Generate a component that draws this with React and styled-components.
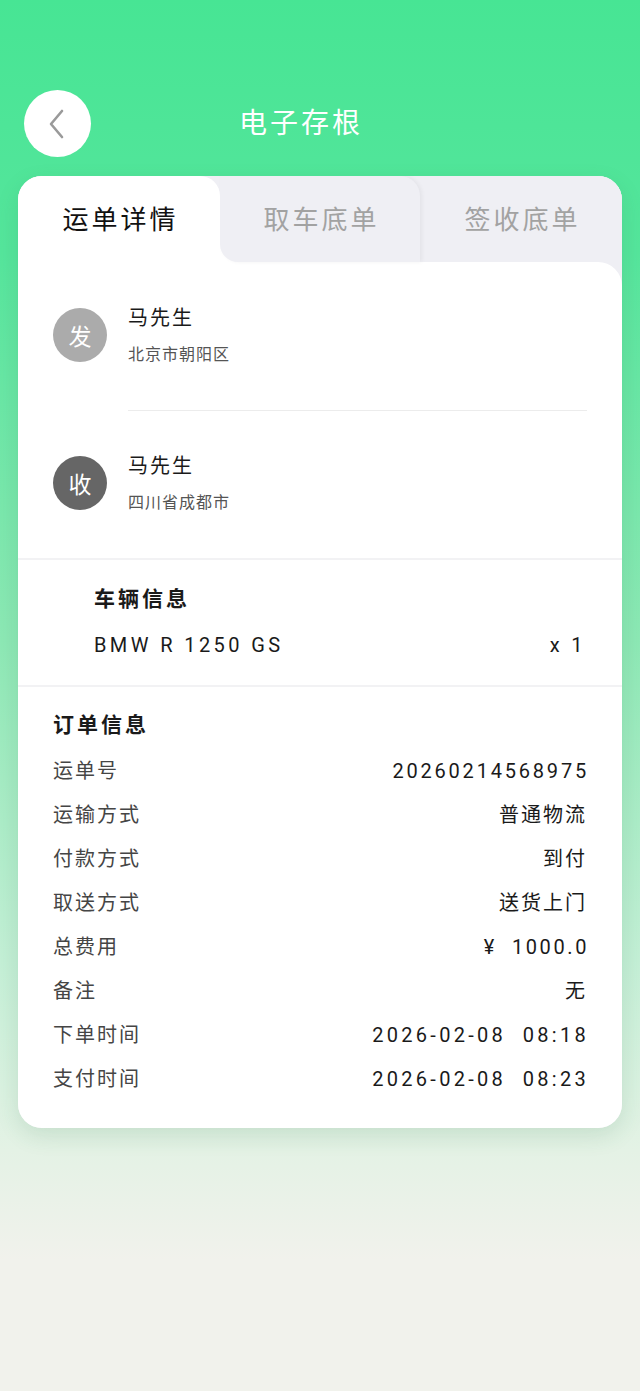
import styled, { createGlobalStyle } from "styled-components";

const GlobalStyle = createGlobalStyle`
  * { box-sizing: border-box; }
  body {
    margin: 0;
    font-family: Roboto, "Noto Sans CJK SC", sans-serif;
    background: #f1f2ec;
  }
`;

const parties = [
  { tag: "发", name: "马先生", address: "北京市朝阳区", dark: false },
  { tag: "收", name: "马先生", address: "四川省成都市", dark: true },
];

const orderRows = [
  { label: "运单号", value: "20260214568975", spacing: 2.8 },
  { label: "运输方式", value: "普通物流" },
  { label: "付款方式", value: "到付" },
  { label: "取送方式", value: "送货上门" },
  { label: "总费用", value: "¥  1000.0", spacing: 2.6 },
  { label: "备注", value: "无" },
  { label: "下单时间", value: "2026-02-08  08:18", spacing: 3.3 },
  { label: "支付时间", value: "2026-02-08  08:23", spacing: 3.3 },
];

const tabs = ["运单详情", "取车底单", "签收底单"];

const App = () => {
  return (
    <Page>
      <GlobalStyle />
      <Header>
        <BackButton aria-label="返回">
          <svg width="16" height="30" viewBox="0 0 16 30">
            <polyline
              points="14,2 3,15 14,28"
              fill="none"
              stroke="#9a9a9a"
              strokeWidth="2.6"
              strokeLinecap="round"
              strokeLinejoin="round"
            />
          </svg>
        </BackButton>
        <Title>电子存根</Title>
      </Header>

      <Card>
        <TabBar>
          {tabs.map((t, i) => (
            <Tab key={t} $active={i === 0} $index={i}>
              {t}
            </Tab>
          ))}
        </TabBar>

        <Content>
          <PartySection>
            {parties.map((p, i) => (
              <div key={p.tag}>
                {i > 0 && <PartyDivider />}
                <PartyRow>
                  <Avatar $dark={p.dark}>{p.tag}</Avatar>
                  <PartyInfo>
                    <PartyName>{p.name}</PartyName>
                    <PartyAddress>{p.address}</PartyAddress>
                  </PartyInfo>
                </PartyRow>
              </div>
            ))}
          </PartySection>

          <VehicleSection>
            <SectionTitle>车辆信息</SectionTitle>
            <VehicleRow>
              <span>BMW R 1250 GS</span>
              <span>x 1</span>
            </VehicleRow>
          </VehicleSection>

          <OrderSection>
            <SectionTitle>订单信息</SectionTitle>
            <OrderList>
              {orderRows.map(({ label, value, spacing }) => (
                <OrderRow key={label}>
                  <Label>{label}</Label>
                  <Value $spacing={spacing}>{value}</Value>
                </OrderRow>
              ))}
            </OrderList>
          </OrderSection>
        </Content>
      </Card>
    </Page>
  );
};

const Page = styled.div`
  min-height: 1391px;
  padding: 90px 18px 40px;
  background: linear-gradient(
    180deg,
    #47e594 0px,
    #55e59c 250px,
    #8de8b5 640px,
    #c4efd6 960px,
    #e4f2e5 1150px,
    #f1f2ec 1260px,
    #f1f2ec 100%
  );
`;

const Header = styled.div`
  display: flex;
  align-items: center;
  padding-left: 6px;
  height: 67px;
`;

const BackButton = styled.button`
  width: 67px;
  height: 67px;
  border-radius: 50%;
  border: none;
  background: #fff;
  display: flex;
  align-items: center;
  justify-content: center;
  padding: 0 4px 0 0;
  cursor: pointer;
`;

const Title = styled.h1`
  margin: 0 0 0 148px;
  font-size: 28px;
  font-weight: 400;
  letter-spacing: 3px;
  color: #fff;
  line-height: 40px;
`;

const Card = styled.div`
  margin-top: 19px;
  background: #efeff4;
  border-radius: 24px;
  overflow: hidden;
  box-shadow: 0 8px 22px rgba(40, 110, 70, 0.14);
`;

const TabBar = styled.div`
  display: grid;
  grid-template-columns: 202px 200px 1fr;
  height: 86px;
  background: linear-gradient(180deg, #efeff4 50%, #fff 50%);
`;

const Tab = styled.div`
  position: relative;
  z-index: ${(p) => 3 - p.$index};
  display: flex;
  align-items: center;
  justify-content: center;
  padding: 0 0 4px 3px;
  font-size: 26px;
  letter-spacing: 3px;
  color: ${(p) => (p.$active ? "#111" : "#a2a2a2")};
  background: ${(p) => (p.$active ? "#fff" : "#efeff4")};
  border-radius: ${(p) =>
    p.$active ? "0 20px 0 0" : p.$index === 1 ? "0 20px 0 18px" : "0"};
  box-shadow: ${(p) =>
    p.$index === 1 ? "2px 0 4px rgba(0, 0, 0, 0.05)" : "none"};
`;

const Content = styled.div`
  background: #fff;
  border-radius: 0 24px 0 0;
`;

const PartySection = styled.div`
  padding: 42px 35px 44px;
  border-bottom: 2px solid #f2f2f4;
`;

const PartyRow = styled.div`
  display: flex;
  align-items: center;
  gap: 21px;
`;

const PartyDivider = styled.div`
  height: 1px;
  margin: 44px 0 41px 75px;
  background: #ececec;
`;

const Avatar = styled.div`
  width: 54px;
  height: 54px;
  border-radius: 50%;
  flex-shrink: 0;
  display: flex;
  align-items: center;
  justify-content: center;
  font-size: 23px;
  color: #fff;
  background: ${(p) => (p.$dark ? "#666666" : "#ababab")};
`;

const PartyInfo = styled.div`
  display: flex;
  flex-direction: column;
  gap: 12px;
`;

const PartyName = styled.div`
  font-size: 20px;
  line-height: 28px;
  letter-spacing: 2px;
  color: #1a1a1a;
`;

const PartyAddress = styled.div`
  font-size: 16px;
  line-height: 22px;
  letter-spacing: 1px;
  color: #555;
`;

const SectionTitle = styled.div`
  font-size: 21px;
  line-height: 28px;
  font-weight: 700;
  letter-spacing: 3px;
  color: #1a1a1a;
`;

const VehicleSection = styled.div`
  padding: 25px 36px 26px 76px;
  border-bottom: 2px solid #f2f2f4;
  display: flex;
  flex-direction: column;
  gap: 18px;
`;

const VehicleRow = styled.div`
  display: flex;
  justify-content: space-between;
  font-size: 20px;
  line-height: 28px;
  letter-spacing: 3.4px;
  color: #1a1a1a;
`;

const OrderSection = styled.div`
  padding: 24px 35px 35px;
  display: flex;
  flex-direction: column;
  gap: 18px;
`;

const OrderList = styled.div`
  display: flex;
  flex-direction: column;
  gap: 16px;
`;

const OrderRow = styled.div`
  display: flex;
  justify-content: space-between;
  align-items: center;
  font-size: 20px;
  line-height: 28px;
  letter-spacing: 2px;
`;

const Label = styled.span`
  color: #454545;
`;

const Value = styled.span`
  color: #1a1a1a;
  white-space: pre;
  letter-spacing: ${(p) => (p.$spacing ? `${p.$spacing}px` : "2px")};
  margin-right: ${(p) => (p.$spacing ? "-2px" : "0")};
`;

export default App;
